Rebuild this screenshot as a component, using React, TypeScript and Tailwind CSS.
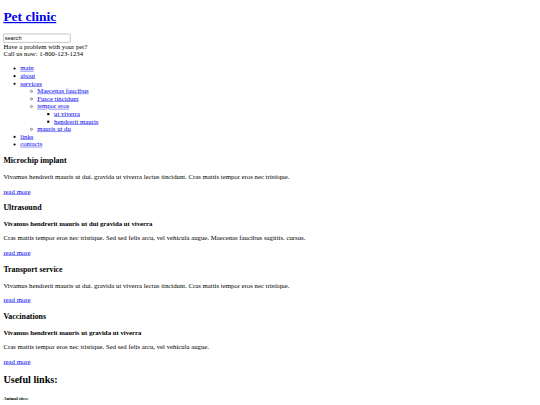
const linkCls = 'text-[#0000ee] underline';

type Service = {
  title: string;
  lead?: string;
  text: string;
};

const services: Service[] = [
  {
    title: 'Microchip implant',
    text: 'Vivamus hendrerit mauris ut dui. gravida ut viverra lectus tincidunt. Cras mattis tempor eros nec tristique.',
  },
  {
    title: 'Ultrasound',
    lead: 'Vivamus hendrerit mauris ut dui gravida ut viverra',
    text: 'Cras mattis tempor eros nec tristique. Sed sed felis arcu, vel vehicula augue. Maecenas faucibus sagittis. cursus.',
  },
  {
    title: 'Transport service',
    text: 'Vivamus hendrerit mauris ut dui. gravida ut viverra lectus tincidunt. Cras mattis tempor eros nec tristique.',
  },
  {
    title: 'Vaccinations',
    lead: 'Vivamus hendrerit mauris ut gravida ut viverra',
    text: 'Cras mattis tempor eros nec tristique. Sed sed felis arcu, vel vehicula augue.',
  },
];

function Link({ children }: { children: React.ReactNode }) {
  return (
    <a href="#" className={linkCls}>
      {children}
    </a>
  );
}

export default function App() {
  return (
    <div className="bg-white h-screen overflow-hidden">
      {/* page laid out at 1280px width, shown at 540px */}
      <div className="w-[1280px] origin-top-left scale-[0.421875] pt-px">
        <div className="mx-2 -mt-px font-['Liberation_Serif',serif] text-[16px] leading-[18px] text-black">
          <h1 className="text-[32px] font-bold leading-[1.15] my-[21.44px]">
            <Link>Pet clinic</Link>
          </h1>

          <form>
            <input
              type="text"
              defaultValue="search"
              className="block w-[159px] h-[21px] border border-[#767676] rounded-[2px] px-[2px] font-['Liberation_Sans',sans-serif] text-[13.33px] text-black bg-white"
            />
          </form>
          <div>Have a problem with your pet?</div>
          <div>Call us now: 1-800-123-1234</div>

          <ul className="list-disc pl-10 my-4">
            <li><Link>main</Link></li>
            <li><Link>about</Link></li>
            <li>
              <Link>services</Link>
              <ul className="list-[circle] pl-10">
                <li><Link>Maecenas faucibus</Link></li>
                <li><Link>Fusce tincidunt</Link></li>
                <li>
                  <Link>tempor eros</Link>
                  <ul className="list-[square] pl-10">
                    <li><Link>ut viverra</Link></li>
                    <li><Link>hendrerit mauris</Link></li>
                  </ul>
                </li>
                <li><Link>mauris ut du</Link></li>
              </ul>
            </li>
            <li><Link>links</Link></li>
            <li><Link>contacts</Link></li>
          </ul>

          {services.map((s) => (
            <div key={s.title}>
              <h3 className="text-[18.72px] font-bold leading-[1.2] my-[18.72px]">{s.title}</h3>
              {s.lead && (
                <p className="my-4">
                  <strong className="font-bold">{s.lead}</strong>
                </p>
              )}
              <p className="my-4">{s.text}</p>
              <p className="my-4">
                <Link>read more</Link>
              </p>
            </div>
          ))}

          <h2 className="text-[24px] font-bold leading-[1.15] my-[19.92px]">Useful links:</h2>
          <h6 className="text-[10.72px] font-bold leading-[1.15] my-[24.98px]">Animal sites:</h6>
        </div>
      </div>
    </div>
  );
}
